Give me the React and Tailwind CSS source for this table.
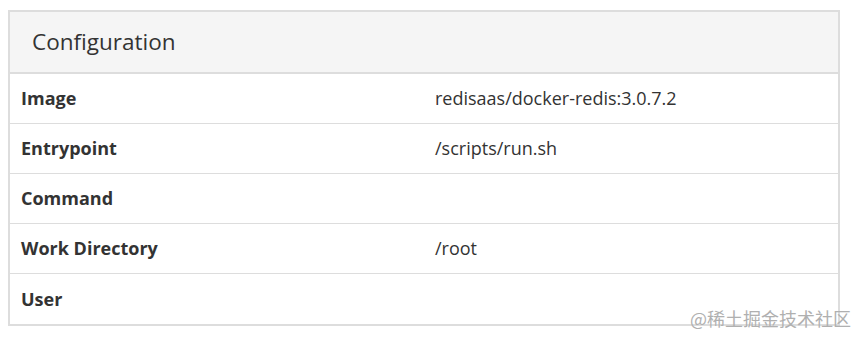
import React from "react";

const rows = [
  ["Image", "redisaas/docker-redis:3.0.7.2"],
  ["Entrypoint", "/scripts/run.sh"],
  ["Command", ""],
  ["Work Directory", "/root"],
  ["User", ""],
];

export default function App() {
  return (
    <div className="relative w-[857px] h-[337px] bg-white pt-[10px] pl-[8px] font-['Open_Sans',sans-serif] text-[#333]">
      <div className="w-[832px] border-2 border-[#ddd]">
        <div className="h-[62px] bg-[#f5f5f5] border-b-2 border-[#ddd] flex items-center pl-[22px] text-[22.5px]">
          Configuration
        </div>
        <div>
          {rows.map(([k, v], i) => (
            <div
              key={k}
              className={`flex h-[50px] items-center text-[18px] ${i < rows.length - 1 ? "border-b border-[#ddd]" : "h-[49px]"}`}
            >
              <div className="w-[414px] pl-[11px] font-bold">{k}</div>
              <div className="pl-[11px]">{v}</div>
            </div>
          ))}
        </div>
      </div>
      <div className="absolute left-[690px] top-[309px] text-[18px] text-[#b0b0b0] font-['Noto_Sans_CJK_SC',sans-serif] leading-none">
        @稀土掘金技术社区
      </div>
    </div>
  );
}
